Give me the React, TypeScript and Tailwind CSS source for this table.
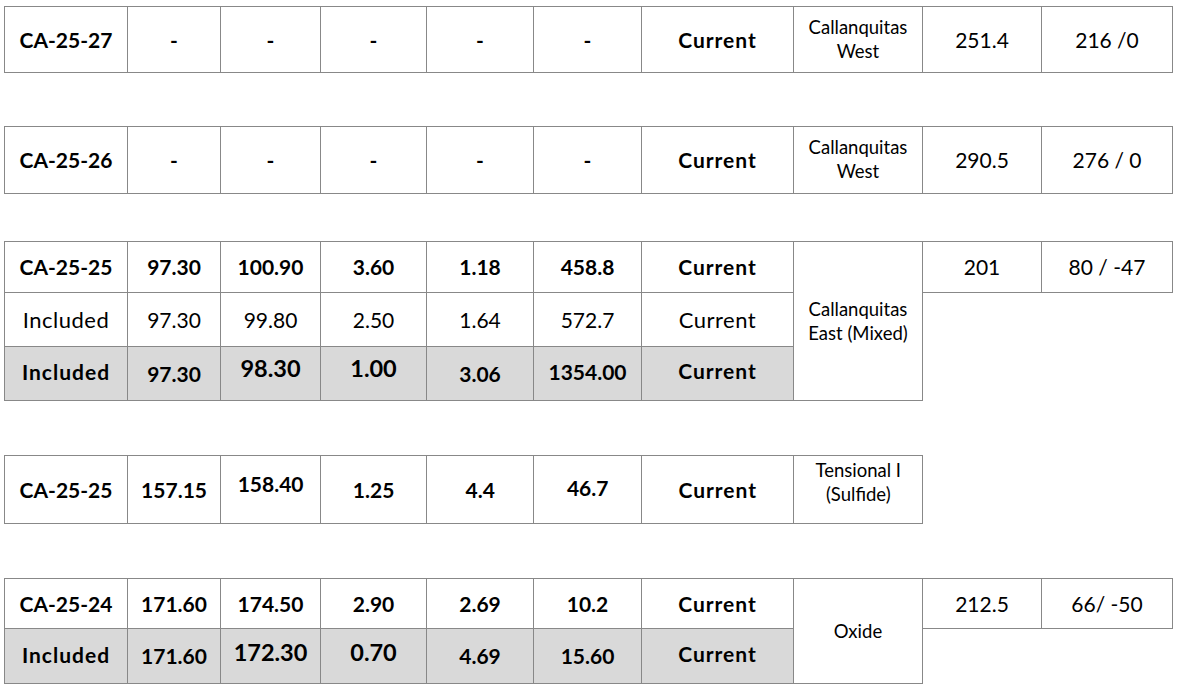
import React from 'react';

type CellProps = {
  children?: React.ReactNode;
  bold?: boolean;
  big?: boolean;
  small?: boolean;
  gray?: boolean;
  rowSpan?: number;
  className?: string;
};

const Cell = ({ children, bold, big, small, gray, rowSpan, className = '' }: CellProps) => {
  let size = 'text-[21px]';
  if (big) size = 'text-[23.5px]';
  if (small) size = 'text-[18.5px] leading-[24px]';
  return (
    <td
      rowSpan={rowSpan}
      className={`border border-[#888888] p-0 text-center align-middle text-black ${size} ${
        bold ? 'font-bold' : 'font-normal'
      } ${gray ? 'bg-[#d9d9d9]' : ''} ${className}`}
    >
      {children}
    </td>
  );
};

const Cols = () => (
  <colgroup>
    <col className="w-[123px]" />
    <col className="w-[93px]" />
    <col className="w-[100px]" />
    <col className="w-[106px]" />
    <col className="w-[107px]" />
    <col className="w-[108px]" />
    <col className="w-[152px]" />
    <col className="w-[129px]" />
    <col className="w-[119px]" />
    <col className="w-[131px]" />
  </colgroup>
);

const Table = ({ className = '', children }: { className?: string; children: React.ReactNode }) => (
  <table className={`ml-[4px] w-[1169px] table-fixed border-collapse ${className}`}>
    <Cols />
    <tbody>{children}</tbody>
  </table>
);

const Dashes = () => (
  <>
    {[0, 1, 2, 3, 4].map((i) => (
      <Cell key={i} bold>
        -
      </Cell>
    ))}
  </>
);

export default function App() {
  return (
    <div className="min-h-[690px] w-[1178px] bg-white pt-[6px] [font-family:Lato,sans-serif]">
      <Table>
        <tr className="h-[66px]">
          <Cell bold>CA-25-27</Cell>
          <Dashes />
          <Cell bold className="tracking-[1px]">Current</Cell>
          <Cell small className="pb-[2px]">
            Callanquitas
            <br />
            West
          </Cell>
          <Cell className="text-[17.5px]">251.4</Cell>
          <Cell className="text-[17.5px]">216 /0</Cell>
        </tr>
      </Table>

      <Table className="mt-[53px]">
        <tr className="h-[67px]">
          <Cell bold>CA-25-26</Cell>
          <Dashes />
          <Cell bold className="tracking-[1px]">Current</Cell>
          <Cell small className="pb-[2px]">
            Callanquitas
            <br />
            West
          </Cell>
          <Cell className="text-[17.5px]">290.5</Cell>
          <Cell className="text-[17.5px]">276 / 0</Cell>
        </tr>
      </Table>

      <Table className="mt-[47px]">
        <tr className="h-[51px]">
          <Cell bold>CA-25-25</Cell>
          <Cell bold>97.30</Cell>
          <Cell bold>100.90</Cell>
          <Cell bold>3.60</Cell>
          <Cell bold>1.18</Cell>
          <Cell bold>458.8</Cell>
          <Cell bold className="tracking-[1px]">Current</Cell>
          <Cell small rowSpan={3} className="leading-[20px]">
            Callanquitas
            <br />
            East (Mixed)
          </Cell>
          <Cell className="text-[17.5px]">201</Cell>
          <Cell className="text-[17.5px]">80 / -47</Cell>
        </tr>
        <tr className="h-[54px]">
          <Cell className="text-[22px] tracking-[0.5px]">Included</Cell>
          <Cell>97.30</Cell>
          <Cell>99.80</Cell>
          <Cell>2.50</Cell>
          <Cell>1.64</Cell>
          <Cell>572.7</Cell>
          <Cell className="text-[22px] tracking-[0.5px]">Current</Cell>
        </tr>
        <tr className="h-[54px]">
          <Cell bold gray className="pb-[4px] tracking-[1px]">Included</Cell>
          <Cell bold gray>97.30</Cell>
          <Cell bold big gray className="pb-[10px]">98.30</Cell>
          <Cell bold big gray className="pb-[10px]">1.00</Cell>
          <Cell bold gray>3.06</Cell>
          <Cell bold gray className="pb-[4px]">1354.00</Cell>
          <Cell bold gray className="pb-[6px] tracking-[1px]">Current</Cell>
        </tr>
      </Table>

      <Table className="mt-[54px]">
        <tr className="h-[68px]">
          <Cell bold>CA-25-25</Cell>
          <Cell bold>157.15</Cell>
          <Cell bold className="pb-[12px]">158.40</Cell>
          <Cell bold>1.25</Cell>
          <Cell bold>4.4</Cell>
          <Cell bold className="pb-[4px]">46.7</Cell>
          <Cell bold className="tracking-[1px]">Current</Cell>
          <Cell small className="pb-[15px] leading-[23px]">
            Tensional I
            <br />
            (Sulfide)
          </Cell>
        </tr>
      </Table>

      <Table className="mt-[54px]">
        <tr className="h-[50px]">
          <Cell bold>CA-25-24</Cell>
          <Cell bold>171.60</Cell>
          <Cell bold>174.50</Cell>
          <Cell bold>2.90</Cell>
          <Cell bold>2.69</Cell>
          <Cell bold>10.2</Cell>
          <Cell bold className="tracking-[1px]">Current</Cell>
          <Cell small rowSpan={2}>
            Oxide
          </Cell>
          <Cell className="text-[17.5px]">212.5</Cell>
          <Cell className="text-[17.5px]">66/ -50</Cell>
        </tr>
        <tr className="h-[55px]">
          <Cell bold gray className="pb-[2px] tracking-[1px]">Included</Cell>
          <Cell bold gray>171.60</Cell>
          <Cell bold big gray className="pb-[6px]">172.30</Cell>
          <Cell bold big gray className="pb-[6px]">0.70</Cell>
          <Cell bold gray>4.69</Cell>
          <Cell bold gray>15.60</Cell>
          <Cell bold gray className="pb-[4px] tracking-[1px]">Current</Cell>
        </tr>
      </Table>
    </div>
  );
}
